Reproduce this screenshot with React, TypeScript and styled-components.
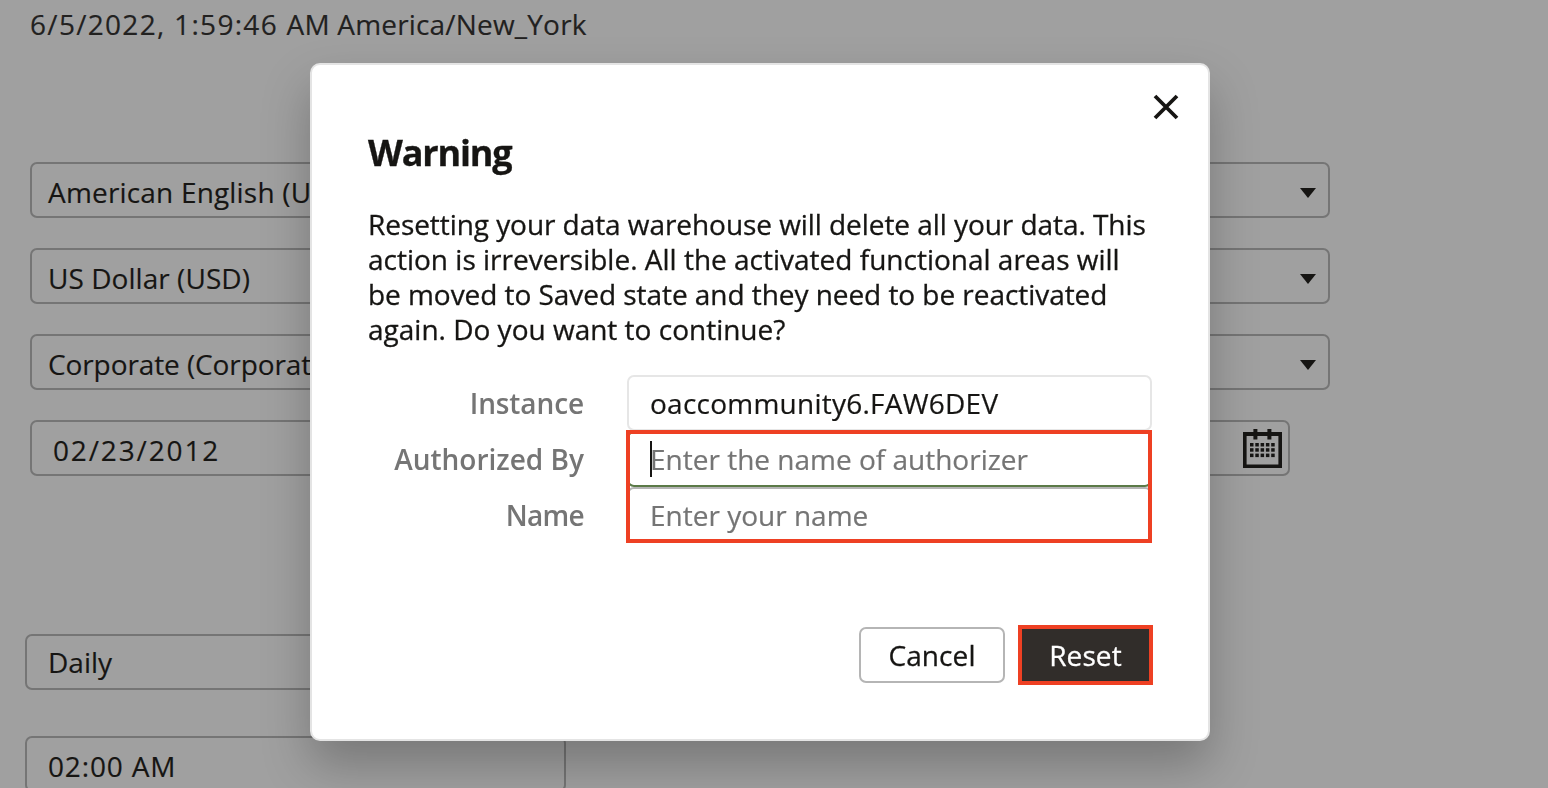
import React from 'react';
import styled, { createGlobalStyle } from 'styled-components';

const GlobalStyle = createGlobalStyle`
  *, *::before, *::after { box-sizing: border-box; }
  body {
    margin: 0;
    background: #a0a0a0;
    color: #161513;
    font: 400 28px/35px "Open Sans", "Noto Sans", sans-serif;
    -webkit-text-stroke: 0.15px currentColor;
    overflow: hidden;
  }
`;

const Page = styled.main`
  height: 788px;
  overflow: hidden;
  padding: 7px 25px 0;
  display: flex;
  flex-direction: column;
  align-items: flex-start;
  white-space: nowrap;
`;

const Timestamp = styled.div`
  padding-left: 5px;
  color: #222120;
`;

const FieldGroup = styled.section<{ $top: number; $gap: number; $indent?: number }>`
  display: flex;
  flex-direction: column;
  gap: ${(p) => p.$gap}px;
  margin-top: ${(p) => p.$top}px;
  padding-left: ${(p) => p.$indent ?? 0}px;
`;

const Field = styled.div<{ $width: number; $left: number; $right?: number; $drop?: number }>`
  width: ${(p) => p.$width}px;
  height: 56px;
  flex: none;
  display: flex;
  align-items: center;
  justify-content: space-between;
  padding: ${(p) => p.$drop ?? 0}px ${(p) => p.$right ?? 12}px 0 ${(p) => p.$left}px;
  border: 2px solid #757575;
  border-radius: 7px;
`;

const Value = styled.span<{ $spacing?: number }>`
  letter-spacing: ${(p) => p.$spacing ?? 0}px;
`;

const ArrowIcon = styled.svg`
  width: 16px;
  height: 10px;
  margin-top: 2px;
  fill: #161513;
`;

const CalendarSvg = styled.svg`
  width: 39px;
  height: 39px;
  margin-bottom: 4px;
  fill: #161513;
`;

const Overlay = styled.div`
  position: fixed;
  inset: 0;
  display: flex;
  justify-content: center;
  align-items: flex-start;
  padding: 63px 28px 0 0;
`;

const Dialog = styled.section`
  width: 900px;
  height: 678px;
  display: flex;
  flex-direction: column;
  padding: 28px 56px 0;
  background: #fff;
  border: 2px solid #e4e4e4;
  border-radius: 10px;
  box-shadow: 0 24px 48px rgba(0, 0, 0, 0.25);
  -webkit-text-stroke: 0.3px currentColor;
`;

const CloseButton = styled.button`
  align-self: flex-end;
  width: 28px;
  height: 28px;
  margin-right: -28px;
  padding: 0;
  border: 0;
  background: none;

  svg {
    display: block;
    width: 28px;
    height: 28px;
    stroke: #161513;
    stroke-width: 3.8;
  }
`;

const Title = styled.h1`
  margin: 10px 0 0;
  font-size: 36px;
  line-height: 44px;
  font-weight: 700;
  letter-spacing: -1.15px;
`;

const Message = styled.p`
  margin: 32px 0 0;
  white-space: nowrap;
`;

const Form = styled.div`
  display: grid;
  grid-template-columns: 216px 526px;
  column-gap: 42px;
  margin-top: 28px;
  -webkit-text-stroke-width: 0.2px;
`;

const Labels = styled.div`
  display: flex;
  flex-direction: column;
  align-items: flex-end;
`;

const Label = styled.label<{ $spacing?: number }>`
  height: 56px;
  line-height: 56px;
  font-weight: 600;
  color: #757575;
  letter-spacing: ${(p) => p.$spacing ?? 0}px;
  -webkit-text-stroke: 0;
`;

const Inputs = styled.div`
  position: relative;
  display: flex;
  flex-direction: column;
`;

const Input = styled.div<{ $border: string; $muted?: boolean }>`
  height: 56px;
  display: flex;
  align-items: center;
  margin-left: 1px;
  padding-left: 21px;
  border: 2px solid ${(p) => p.$border};
  border-radius: 7px;
  color: ${(p) => (p.$muted ? '#757575' : '#161513')};
  -webkit-text-stroke-color: currentColor;
`;

const Caret = styled.i`
  width: 2px;
  height: 36px;
  margin-right: -2px;
  background: #161513;
`;

const Highlight = styled.div`
  position: absolute;
  inset: 55px 0 0;
  border: 4px solid #ee4023;
`;

const Actions = styled.div`
  display: flex;
  justify-content: flex-end;
  align-items: center;
  gap: 13px;
  margin: 82px -1px 0 0;
`;

const CancelButton = styled.button`
  width: 146px;
  height: 56px;
  padding: 0;
  border: 2px solid #b5b5b5;
  border-radius: 7px;
  background: #fff;
  color: inherit;
  font: inherit;
  letter-spacing: 0.1px;
`;

const ResetButton = styled.button`
  width: 135px;
  height: 60px;
  padding: 0;
  border: 4px solid #ee4023;
  background: #312d2a;
  color: #fff;
  font: inherit;
  letter-spacing: 0.1px;
  -webkit-text-stroke: 0.3px #fff;
`;

const Arrow = () => (
  <ArrowIcon viewBox="0 0 16 10">
    <path d="M0 0h16L8 10z" />
  </ArrowIcon>
);

const CalendarIcon = () => (
  <CalendarSvg viewBox="0 0 39 39">
    <path
      fillRule="evenodd"
      d="M0 3h10.4V0h4v3h10V0h4v3H39v36H0zM3.6 7v28.4h31.8V7h-7v3.4h-4V7h-10v3.4h-4V7z"
    />
    {[14, 19.2, 24.6].map((y) =>
      [7, 12.3, 17.6, 22.9, 28.2].map((x) => (
        <rect key={`${x}-${y}`} x={x} y={y} width="3.5" height="3.5" />
      )),
    )}
  </CalendarSvg>
);

export default function App() {
  return (
    <>
      <GlobalStyle />
      <Page>
        <Timestamp>
          <Value $spacing={1.3}>6/5/2022, 1:59:46 </Value>
          <Value $spacing={0.18}>AM America/New_York</Value>
        </Timestamp>
        <FieldGroup $top={120} $gap={30} $indent={5}>
          <Field $width={1300} $left={16} $drop={4}>
            <Value $spacing={0.18}>American English (US)</Value>
            <Arrow />
          </Field>
          <Field $width={1300} $left={16} $drop={4}>
            <Value $spacing={0.05}>US Dollar (USD)</Value>
            <Arrow />
          </Field>
          <Field $width={1300} $left={16} $drop={4}>
            <Value $spacing={-0.1}>Corporate (Corporate)</Value>
            <Arrow />
          </Field>
          <Field $width={1260} $left={21} $right={6.5} $drop={4}>
            <Value $spacing={1.85}>02/23/2012</Value>
            <CalendarIcon />
          </Field>
        </FieldGroup>
        <FieldGroup $top={158} $gap={46}>
          <Field $width={541} $left={21}>
            <Value>Daily</Value>
          </Field>
          <Field $width={541} $left={21} $drop={4}>
            <Value $spacing={0.85}>02:00 AM</Value>
          </Field>
        </FieldGroup>
      </Page>
      <Overlay>
        <Dialog role="dialog" aria-labelledby="dialog-title">
          <CloseButton aria-label="Close">
            <svg viewBox="0 0 28 28">
              <path d="M3 3l22 22M25 3L3 25" />
            </svg>
          </CloseButton>
          <Title id="dialog-title">Warning</Title>
          <Message>
            <Value $spacing={-0.06}>Resetting your data warehouse will delete all your data. This</Value>
            <br />
            <Value>action is irreversible. All the activated functional areas will</Value>
            <br />
            <Value $spacing={-0.05}>be moved to Saved state and they need to be reactivated</Value>
            <br />
            <Value>again. Do you want to continue?</Value>
          </Message>
          <Form>
            <Labels>
              <Label $spacing={-0.1}>Instance</Label>
              <Label>Authorized By</Label>
              <Label $spacing={-0.7}>Name</Label>
            </Labels>
            <Inputs>
              <Input $border="#e6e6e6">
                <Value $spacing={0.24}>oaccommunity6.FAW6DEV</Value>
              </Input>
              <Input $border="#5b7a47" $muted>
                <Caret />
                <Value>Enter the name of authorizer</Value>
              </Input>
              <Input $border="#b5b5b5" $muted>
                <Value>Enter your name</Value>
              </Input>
              <Highlight />
            </Inputs>
          </Form>
          <Actions>
            <CancelButton>Cancel</CancelButton>
            <ResetButton>Reset</ResetButton>
          </Actions>
        </Dialog>
      </Overlay>
    </>
  );
}
